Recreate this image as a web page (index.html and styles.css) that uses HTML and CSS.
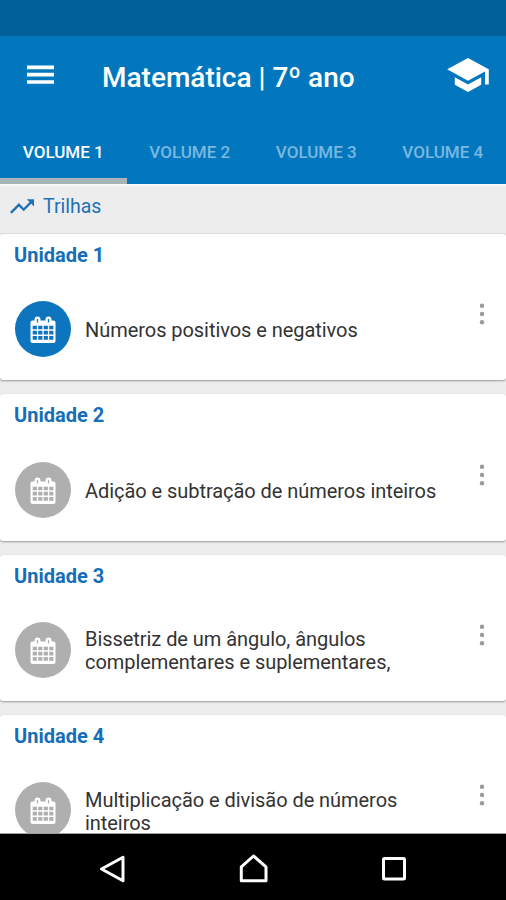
FILE: index.html
```html
<!DOCTYPE html>
<html lang="pt-BR">
<head>
<meta charset="utf-8">
<meta name="viewport" content="width=device-width, initial-scale=1">
<title>Matemática | 7º ano</title>
<link rel="stylesheet" href="styles.css">
</head>
<body>
<svg class="defs" aria-hidden="true">
  <symbol id="calendar" viewBox="0 0 26 28">
    <path fill="#fff" d="M2.500 4.500H4.500V3.500a3 3 0 0 1 6 0V4.500H15.500V3.500a3 3 0 0 1 6 0V4.500H23.500a2 2 0 0 1 2 2V25a2 2 0 0 1-2 2H2.500a2 2 0 0 1-2-2V6.500a2 2 0 0 1 2-2Z"/>
    <path stroke="currentColor" stroke-width="1.300" d="M7.500 3V6.500M18.500 3V6.500"/>
    <path stroke="currentColor" stroke-width="3.700" stroke-dasharray="4.200 1.300" d="M2.700 11.500H23.400M2.700 16.700H23.400M2.700 21.900H23.400"/>
  </symbol>
  <symbol id="more" viewBox="0 0 6 24">
    <g fill="#999"><circle cx="3" cy="3.800" r="2.200"/><circle cx="3" cy="12" r="2.200"/><circle cx="3" cy="20.200" r="2.200"/></g>
  </symbol>
</svg>
<div class="screen">
  <div class="status"></div>
  <header class="bar">
    <svg class="menu" viewBox="0 0 27 20"><path stroke="#fff" stroke-width="3.700" d="M0 2.300H27M0 9.600H27M0 17H27"/></svg>
    <h1 class="title">Matemática | 7º ano</h1>
    <svg class="school" viewBox="1 3 22 18"><path fill="#fff" d="M5 13.180v4L12 21l7-3.820v-4L12 17l-7-3.820zM12 3L1 9l11 6 9-4.910V17h2V9L12 3z"/></svg>
  </header>
  <nav class="tabs">
    <a class="tab active">VOLUME 1</a>
    <a class="tab">VOLUME 2</a>
    <a class="tab">VOLUME 3</a>
    <a class="tab">VOLUME 4</a>
  </nav>
  <main class="content">
    <div class="trails">
      <svg class="trend" viewBox="2 6 20 12"><path fill="currentColor" d="M16 6l2.290 2.290-4.880 4.880-4-4L2 16.590 3.410 18l6-6 4 4 6.300-6.290L22 12V6z"/></svg>
      <span>Trilhas</span>
    </div>
    <section class="card">
      <h2 class="unit">Unidade 1</h2>
      <div class="row current">
        <span class="badge"><svg class="cal"><use href="#calendar"/></svg></span>
        <p class="topic">Números positivos e negativos</p>
        <svg class="more"><use href="#more"/></svg>
      </div>
    </section>
    <section class="card">
      <h2 class="unit">Unidade 2</h2>
      <div class="row">
        <span class="badge"><svg class="cal"><use href="#calendar"/></svg></span>
        <p class="topic">Adição e subtração de números inteiros</p>
        <svg class="more"><use href="#more"/></svg>
      </div>
    </section>
    <section class="card">
      <h2 class="unit">Unidade 3</h2>
      <div class="row">
        <span class="badge"><svg class="cal"><use href="#calendar"/></svg></span>
        <p class="topic">Bissetriz de um ângulo, ângulos<br>complementares e suplementares,</p>
        <svg class="more"><use href="#more"/></svg>
      </div>
    </section>
    <section class="card">
      <h2 class="unit">Unidade 4</h2>
      <div class="row">
        <span class="badge"><svg class="cal"><use href="#calendar"/></svg></span>
        <p class="topic">Multiplicação e divisão de números<br>inteiros</p>
        <svg class="more"><use href="#more"/></svg>
      </div>
    </section>
  </main>
  <footer class="navbar">
    <svg viewBox="0 0 30 30"><path d="M4.500 15L26 3.300V26.700Z"/></svg>
    <svg viewBox="0 0 30 30"><path d="M3.300 26.800V12.800L15.500 2L28 12.800V26.800Z"/></svg>
    <svg viewBox="0 0 30 30"><rect x="4.500" y="4.500" width="21" height="20.500" rx="1"/></svg>
  </footer>
</div>
</body>
</html>
```

FILE: styles.css
```css
* { box-sizing: border-box; }
body { margin: 0; font-family: Roboto, "Liberation Sans", sans-serif; }
h1, h2, p { margin: 0; }
.defs { display: none; }
.screen { width: 506px; height: 900px; display: flex; flex-direction: column; overflow: hidden; background: #ededed; }
.status { height: 36px; flex: none; background: #01609a; }
.bar { height: 84px; flex: none; display: flex; align-items: center; padding: 0 17px 4px 27px; background: #0277bd; }
.menu { width: 27px; height: 20px; margin-top: -2px; }
.title { flex: 1; margin-left: 48px; padding-top: 4px; font-size: 28px; font-weight: 500; line-height: 34px; color: #fff; white-space: nowrap; }
.school { width: 42px; height: 34px; margin-top: -2px; }
.tabs { height: 64px; flex: none; display: grid; grid-template-columns: repeat(4, 1fr); background: #0277bd; }
.tab { display: flex; align-items: center; justify-content: center; padding-top: 5px; border-bottom: 6px solid transparent; font-size: 17px; font-weight: 500; color: #7ab8e2; white-space: nowrap; }
.tab.active { color: #fff; border-bottom-color: #a7b3b6; }
.content { flex: 1; min-height: 0; overflow: hidden; border-top: 2px solid #f8f8f8; border-bottom: 1px solid #a0a0a0; }
.trails { height: 48px; display: flex; align-items: center; gap: 9px; padding: 0 0 7px 10px; font-size: 19.500px; color: #2072b7; border-bottom: 1px solid #e0e0e0; }
.trend { width: 24px; height: 15px; }
.card { height: 146.3px; margin-bottom: 14px; padding: 9px 14px 0; background: #fff; border-radius: 3px; box-shadow: 0 1px 2px #999; }
.unit { font-size: 20px; line-height: 25px; font-weight: 700; color: #156fb8; }
.row { height: 56px; margin-top: 33.400px; display: flex; align-items: center; }
.badge { width: 56px; height: 56px; margin-left: 0.500px; flex: none; display: flex; align-items: center; justify-content: center; border-radius: 50%; background: #afafaf; color: #afafaf; }
.current .badge { background: #0c75bd; color: #0c75bd; }
.cal { width: 26px; height: 28px; margin-top: 2px; }
.topic { flex: 1; margin-left: 14.500px; padding-top: 3px; font-size: 20px; line-height: 23px; letter-spacing: -0.050px; color: #333; white-space: nowrap; }
.more { width: 6px; height: 24px; margin: -30px 7px 0 0; }
.navbar { height: 66px; flex: none; display: flex; justify-content: center; align-items: center; gap: 111px; padding-top: 4px; background: #000; }
.navbar svg { width: 30px; height: 30px; fill: none; stroke: #fff; stroke-width: 3; stroke-linejoin: round; }
```
